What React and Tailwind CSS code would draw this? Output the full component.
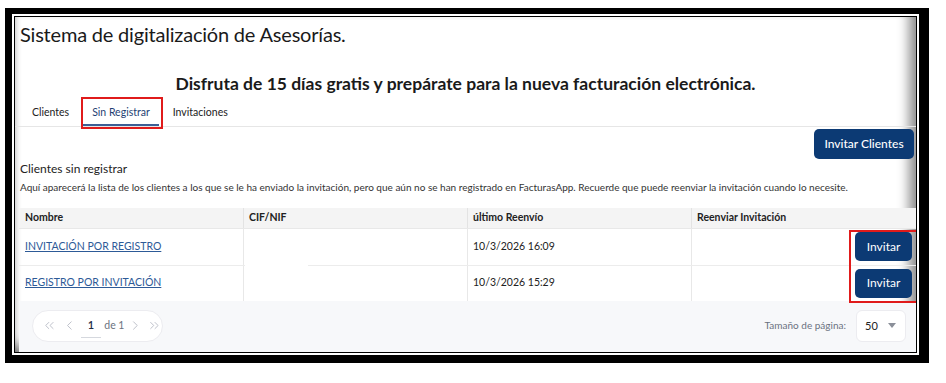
import { ChevronsLeft, ChevronLeft, ChevronRight, ChevronsRight } from 'lucide-react'

const FONT = { fontFamily: 'Lato, "Noto Sans", sans-serif' }

const rows = [
  { name: 'INVITACIÓN POR REGISTRO', date: '10/3/2026 16:09' },
  { name: 'REGISTRO POR INVITACIÓN', date: '10/3/2026 15:29' },
]

function Tabs() {
  return (
    <div className="relative flex gap-[4px] pl-[7px] border-b border-[#e6e6e6] text-[10.5px] text-[#222]">
      <div className="px-[10px] pt-[6px] pb-[5px]">Clientes</div>
      <div className="px-[9px] pt-[6px] pb-[3px] border-b-2 border-[#3b5f95] text-[#1f3f73]">Sin Registrar</div>
      <div className="px-[10px] pt-[6px] pb-[5px]">Invitaciones</div>
      <div className="absolute left-[66px] top-[-2px] w-[82px] h-[32px] border-2 border-[#e01b1b]" />
    </div>
  )
}

function Table() {
  return (
    <div className="relative ml-[4px] text-[10.5px] text-[#222]">
      <div className="grid grid-cols-[225px_224px_224px_1fr] bg-[#f4f4f4] h-[21px] items-center font-bold border-b border-[#e8e8e8]">
        <div className="pl-[6px] h-full flex items-center border-r border-[#e3e3e3]">Nombre</div>
        <div className="pl-[5px] h-full flex items-center border-r border-[#e3e3e3]">CIF/NIF</div>
        <div className="pl-[5px] h-full flex items-center border-r border-[#e3e3e3]">último Reenvío</div>
        <div className="pl-[5px] h-full flex items-center">Reenviar Invitación</div>
      </div>
      {rows.map((r, i) => (
        <div key={i} className={`grid grid-cols-[225px_224px_224px_1fr] h-[36px] items-stretch ${i === 0 ? '' : 'border-t border-[#ececec]'}`}>
          <div className="pl-[6px] flex items-center border-r border-[#e8e8e8]">
            <span className="underline text-[#2d5a97]">{r.name}</span>
          </div>
          <div className="border-r border-[#e8e8e8]" />
          <div className="pl-[5px] flex items-center border-r border-[#e8e8e8]">{r.date}</div>
          <div className="flex items-center justify-end pr-[4px]">
            <button className="w-[57px] h-[29px] rounded-[5px] bg-[#0c3a74] text-white text-[12px]">Invitar</button>
          </div>
        </div>
      ))}
      <div className="absolute left-[226px] top-[57px] w-[63px] h-[2px] bg-white" />
      <div className="absolute right-[-3px] top-[22px] w-[70px] h-[73px] border-2 border-[#e01b1b]" />
    </div>
  )
}

function Footer() {
  return (
    <div className="flex-1 ml-[4px] bg-[#f7f8fa] flex items-start justify-between pt-[9px] pl-[13px] pr-[10px]">
      <div className="flex items-center h-[32px] w-[131px] rounded-full bg-white border border-[#ececf0] pl-[9px] text-[#b8bcc6] whitespace-nowrap">
        <ChevronsLeft size={15} strokeWidth={1.5} />
        <ChevronLeft size={15} strokeWidth={1.5} className="ml-[5px]" />
        <div className="ml-[4px] w-[21px] h-[24px] flex items-center justify-center border-b border-[#d5d8de] text-[11px] text-[#1d2b45] font-semibold">1</div>
        <span className="ml-[3px] text-[10.5px] text-[#6b7280]">de 1</span>
        <ChevronRight size={15} strokeWidth={1.5} className="ml-[4px]" />
        <ChevronsRight size={15} strokeWidth={1.5} className="ml-[4px]" />
      </div>
      <div className="flex items-center gap-[10px]">
        <span className="text-[10px] text-[#6b7280]">Tamaño de página:</span>
        <div className="w-[50px] h-[32px] rounded-[6px] bg-white border border-[#ececf0] flex items-center justify-between pl-[8px] pr-[9px] text-[11px] text-[#222]">
          <span>50</span>
          <svg width="8" height="5" viewBox="0 0 8 5"><path d="M0 0h8L4 5z" fill="#8a8f99" /></svg>
        </div>
      </div>
    </div>
  )
}

export default function App() {
  return (
    <div className="w-[946px] h-[383px] bg-white pt-[8px] pl-[5px]" style={FONT}>
      <div className="w-[924px] h-[355px] bg-black border-l-[7px] border-t-[6px] border-r-[10px] border-b-[8px] border-black">
        <div className="h-full border-2 border-white">
          <div className="h-full border border-black">
            <div className="h-full bg-white flex flex-col shadow-[inset_-10px_-10px_12px_-3px_rgba(0,0,0,0.45),inset_4px_0_5px_-2px_rgba(0,0,0,0.2)] overflow-hidden">
              <h1 className="pl-[5px] pt-[5px] text-[20px] leading-[24px] text-[#1a1a1a] tracking-[-0.2px]">Sistema de digitalización de Asesorías.</h1>
              <div className="mt-[28px] text-center text-[17.5px] leading-[20px] font-bold text-[#1a1a1a]">
                Disfruta de 15 días gratis y prepárate para la nueva facturación electrónica.
              </div>
              <div className="mt-[5px]">
                <Tabs />
              </div>
              <div className="flex justify-end pr-[2px] mt-[2px]">
                <button className="w-[100px] h-[30px] rounded-[5px] bg-[#0c3a74] text-white text-[12px] font-medium">Invitar Clientes</button>
              </div>
              <div className="pl-[5px] mt-[2px] text-[12px] leading-[16px] text-[#222]">Clientes sin registrar</div>
              <div className="pl-[5px] mt-[3px] text-[10px] leading-[14px] text-[#333]">
                Aquí aparecerá la lista de los clientes a los que se le ha enviado la invitación, pero que aún no se han registrado en FacturasApp. Recuerde que puede reenviar la invitación cuando lo necesite.
              </div>
              <div className="mt-[14px]">
                <Table />
              </div>
              <Footer />
            </div>
          </div>
        </div>
      </div>
    </div>
  )
}
